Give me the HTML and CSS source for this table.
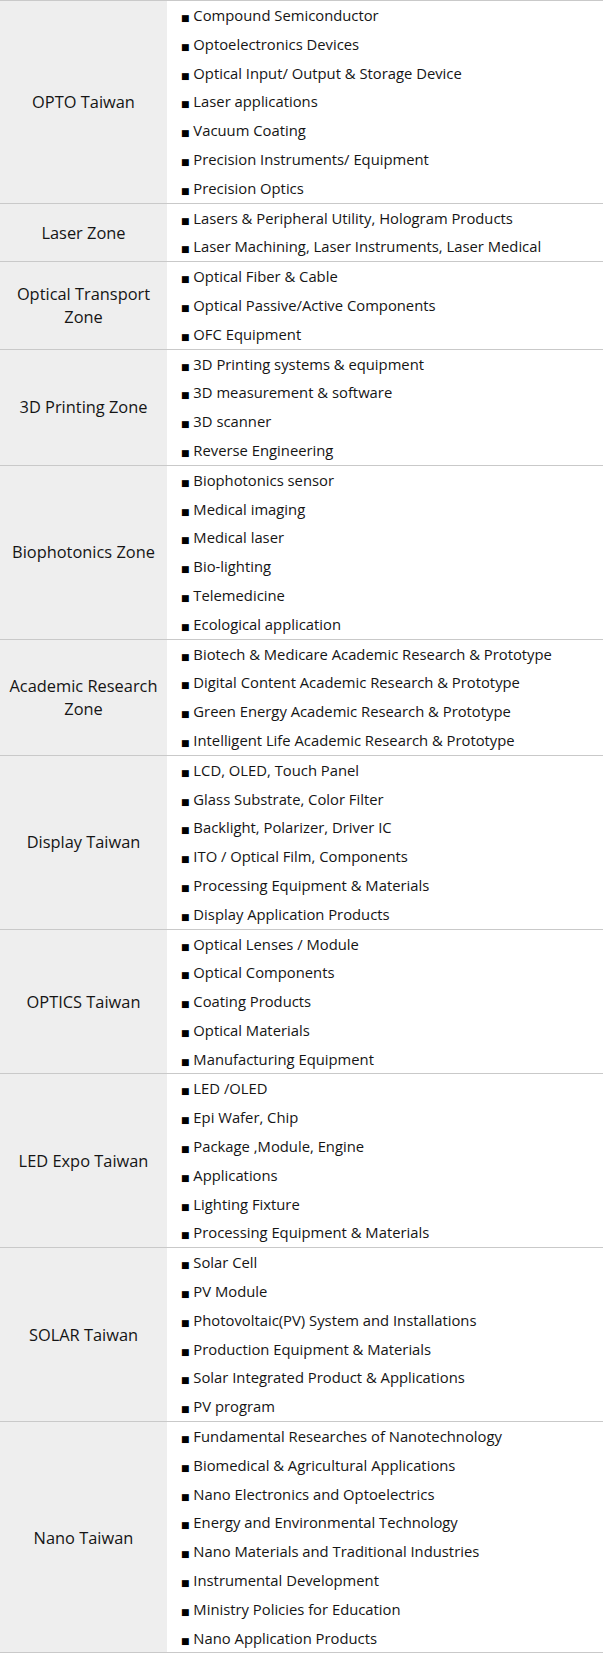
FILE: index.html
```html
<!DOCTYPE html>
<html lang="en">
<head>
<meta charset="utf-8">
<title>Exhibition Zones</title>
<link rel="stylesheet" href="styles.css">
</head>
<body>
<div class="zones">
  <section class="zone">
    <div class="label">OPTO Taiwan</div>
    <ul class="items">
      <li><span class="b">■</span> Compound Semiconductor</li>
      <li><span class="b">■</span> Optoelectronics Devices</li>
      <li><span class="b">■</span> Optical Input/ Output &amp; Storage Device</li>
      <li><span class="b">■</span> Laser applications</li>
      <li><span class="b">■</span> Vacuum Coating</li>
      <li><span class="b">■</span> Precision Instruments/ Equipment</li>
      <li><span class="b">■</span> Precision Optics</li>
    </ul>
  </section>
  <section class="zone">
    <div class="label">Laser Zone</div>
    <ul class="items">
      <li><span class="b">■</span> Lasers &amp; Peripheral Utility, Hologram Products</li>
      <li><span class="b">■</span> Laser Machining, Laser Instruments, Laser Medical</li>
    </ul>
  </section>
  <section class="zone">
    <div class="label">Optical Transport Zone</div>
    <ul class="items">
      <li><span class="b">■</span> Optical Fiber &amp; Cable</li>
      <li><span class="b">■</span> Optical Passive/Active Components</li>
      <li><span class="b">■</span> OFC Equipment</li>
    </ul>
  </section>
  <section class="zone">
    <div class="label">3D Printing Zone</div>
    <ul class="items">
      <li><span class="b">■</span> 3D Printing systems &amp; equipment</li>
      <li><span class="b">■</span> 3D measurement &amp; software</li>
      <li><span class="b">■</span> 3D scanner</li>
      <li><span class="b">■</span> Reverse Engineering</li>
    </ul>
  </section>
  <section class="zone">
    <div class="label">Biophotonics Zone</div>
    <ul class="items">
      <li><span class="b">■</span> Biophotonics sensor</li>
      <li><span class="b">■</span> Medical imaging</li>
      <li><span class="b">■</span> Medical laser</li>
      <li><span class="b">■</span> Bio-lighting</li>
      <li><span class="b">■</span> Telemedicine</li>
      <li><span class="b">■</span> Ecological application</li>
    </ul>
  </section>
  <section class="zone">
    <div class="label">Academic Research Zone</div>
    <ul class="items">
      <li><span class="b">■</span> Biotech &amp; Medicare Academic Research &amp; Prototype</li>
      <li><span class="b">■</span> Digital Content Academic Research &amp; Prototype</li>
      <li><span class="b">■</span> Green Energy Academic Research &amp; Prototype</li>
      <li><span class="b">■</span> Intelligent Life Academic Research &amp; Prototype</li>
    </ul>
  </section>
  <section class="zone">
    <div class="label">Display Taiwan</div>
    <ul class="items">
      <li><span class="b">■</span> LCD, OLED, Touch Panel</li>
      <li><span class="b">■</span> Glass Substrate, Color Filter</li>
      <li><span class="b">■</span> Backlight, Polarizer, Driver IC</li>
      <li><span class="b">■</span> ITO / Optical Film, Components</li>
      <li><span class="b">■</span> Processing Equipment &amp; Materials</li>
      <li><span class="b">■</span> Display Application Products</li>
    </ul>
  </section>
  <section class="zone">
    <div class="label">OPTICS Taiwan</div>
    <ul class="items">
      <li><span class="b">■</span> Optical Lenses / Module</li>
      <li><span class="b">■</span> Optical Components</li>
      <li><span class="b">■</span> Coating Products</li>
      <li><span class="b">■</span> Optical Materials</li>
      <li><span class="b">■</span> Manufacturing Equipment</li>
    </ul>
  </section>
  <section class="zone">
    <div class="label">LED Expo Taiwan</div>
    <ul class="items">
      <li><span class="b">■</span> LED /OLED</li>
      <li><span class="b">■</span> Epi Wafer, Chip</li>
      <li><span class="b">■</span> Package ,Module, Engine</li>
      <li><span class="b">■</span> Applications</li>
      <li><span class="b">■</span> Lighting Fixture</li>
      <li><span class="b">■</span> Processing Equipment &amp; Materials</li>
    </ul>
  </section>
  <section class="zone">
    <div class="label">SOLAR Taiwan</div>
    <ul class="items">
      <li><span class="b">■</span> Solar Cell</li>
      <li><span class="b">■</span> PV Module</li>
      <li><span class="b">■</span> Photovoltaic(PV) System and Installations</li>
      <li><span class="b">■</span> Production Equipment &amp; Materials</li>
      <li><span class="b">■</span> Solar Integrated Product &amp; Applications</li>
      <li><span class="b">■</span> PV program</li>
    </ul>
  </section>
  <section class="zone">
    <div class="label">Nano Taiwan</div>
    <ul class="items">
      <li><span class="b">■</span> Fundamental Researches of Nanotechnology</li>
      <li><span class="b">■</span> Biomedical &amp; Agricultural Applications</li>
      <li><span class="b">■</span> Nano Electronics and Optoelectrics</li>
      <li><span class="b">■</span> Energy and Environmental Technology</li>
      <li><span class="b">■</span> Nano Materials and Traditional Industries</li>
      <li><span class="b">■</span> Instrumental Development</li>
      <li><span class="b">■</span> Ministry Policies for Education</li>
      <li><span class="b">■</span> Nano Application Products</li>
    </ul>
  </section>
</div>
</body>
</html>
```

FILE: styles.css
```css
html, body {
  margin: 0;
  padding: 0;
  background: #ffffff;
}

body {
  font-family: "Open Sans", "Noto Sans", sans-serif;
  color: #151515;
}

.zones {
  border-top: 1px solid #c9c9c9;
}

.zone {
  display: grid;
  grid-template-columns: 167px 1fr;
  border-bottom: 1px solid #c9c9c9;
}

.label {
  background: #eeeeee;
  display: flex;
  align-items: center;
  justify-content: center;
  text-align: center;
  font-size: 16.4px;
  line-height: 23.4px;
  padding: 0 8px;
}

.items {
  list-style: none;
  margin: 0;
  padding: 0 0 0 14px;
  font-size: 14.8px;
  line-height: 28.8px;
}

.items li {
  height: 28.8px;
  white-space: nowrap;
}

.b {
  font-family: "DejaVu Sans", sans-serif;
  font-size: 9px;
  line-height: 0;
  color: #000;
}
```
